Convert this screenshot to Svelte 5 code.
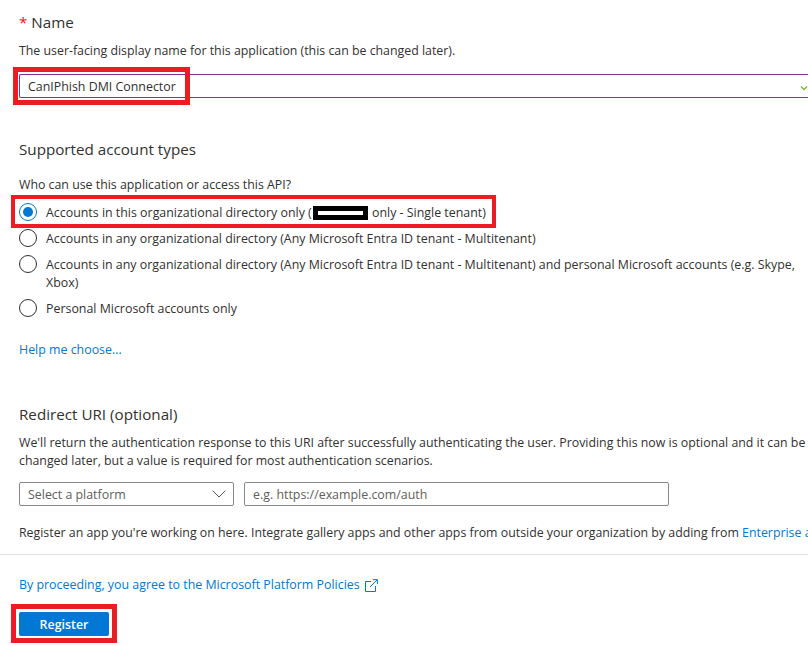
<script lang="ts">
    const accountTypes = [
        { label: "Accounts in any organizational directory (Any Microsoft Entra ID tenant - Multitenant)" },
        { label: "Accounts in any organizational directory (Any Microsoft Entra ID tenant - Multitenant) and personal Microsoft accounts (e.g. Skype, Xbox)" },
        { label: "Personal Microsoft accounts only" },
    ];
</script>

<div class="page">
    <section class="name-section">
        <h2 class="heading"><span class="required">*</span> Name</h2>
        <p class="hint">The user-facing display name for this application (this can be changed later).</p>
        <div class="name-field">
            <span>CanIPhish DMI Connector</span>
            <svg class="check" width="8" height="6" viewBox="0 0 8 6"><path d="M1 1.5 4 4.5 7 1.5" fill="none" stroke="#7fba3c" stroke-width="1.4" /></svg>
        </div>
        <div class="highlight name-highlight"></div>
    </section>

    <section class="accounts-section">
        <h2 class="heading">Supported account types</h2>
        <p class="hint who">Who can use this application or access this API?</p>
        <div class="radios">
            <div class="radio-row">
                <span class="radio checked"></span>
                <span class="radio-label">Accounts in this organizational directory only (<span class="redacted"><span></span></span> only - Single tenant)</span>
            </div>
            {#each accountTypes as item}
                <div class="radio-row">
                    <span class="radio"></span>
                    <span class="radio-label">{item.label}</span>
                </div>
            {/each}
            <div class="highlight radio-highlight"></div>
        </div>
        <a class="link help" href="#help">Help me choose...</a>
    </section>

    <section class="redirect-section">
        <h2 class="heading">Redirect URI (optional)</h2>
        <p class="hint redirect-text">We'll return the authentication response to this URI after successfully authenticating the user. Providing this now is optional and it can be changed later, but a value is required for most authentication scenarios.</p>
        <div class="redirect-inputs">
            <div class="box platform">
                <span>Select a platform</span>
                <svg width="14" height="8" viewBox="0 0 14 8"><path d="M0.7 0.7 7 7 13.3 0.7" fill="none" stroke="#555" stroke-width="1" /></svg>
            </div>
            <div class="box uri">e.g. https://example.com/auth</div>
        </div>
        <p class="hint gallery">Register an app you're working on here. Integrate gallery apps and other apps from outside your organization by adding from <a class="link" href="#enterprise">Enterprise applications</a></p>
    </section>

    <footer class="footer">
        <a class="link policies" href="#policies">
            By proceeding, you agree to the Microsoft Platform Policies
            <svg width="13" height="13" viewBox="0 0 13 13" fill="none" stroke="#0078d4" stroke-width="1"><path d="M6 2.5H0.5V12.5H10.5V7" /><path d="M5 8 12 1M7.8 0.6H12.4V5.2" /></svg>
        </a>
        <div class="register-wrap">
            <button class="register" type="button">Register</button>
            <div class="highlight register-highlight"></div>
        </div>
    </footer>
</div>

<style>
    :global(body) {
        margin: 0;
        background: #fff;
    }

    .page {
        width: 808px;
        height: 646px;
        overflow: hidden;
        font-family: "Open Sans", "Noto Sans", sans-serif;
        font-size: 12.4px;
        color: #323130;
        position: relative;
    }

    section {
        padding-left: 19px;
    }

    .heading {
        margin: 0;
        font-size: 15.2px;
        font-weight: 400;
        line-height: 20px;
    }

    .required {
        color: #e81123;
    }

    .hint {
        margin: 0;
        font-size: 12.35px;
        line-height: 18px;
    }

    .name-section {
        position: relative;
        padding-top: 12px;
    }

    .name-section .hint {
        margin-top: 10px;
    }

    .name-field {
        margin-top: 14px;
        height: 22px;
        border: 1px solid #8a2da5;
        border-right: none;
        border-radius: 2px 0 0 2px;
        padding: 0 0 0 8px;
        display: flex;
        align-items: center;
        justify-content: space-between;
    }

    .check {
        margin-top: 4px;
    }

    .highlight {
        position: absolute;
        box-sizing: border-box;
        border: 5px solid #ed1c24;
        pointer-events: none;
    }

    .name-highlight {
        left: 13px;
        top: 67px;
        width: 177px;
        height: 38px;
    }

    .accounts-section {
        margin-top: 41px;
    }

    .who {
        margin-top: 17px;
    }

    .radios {
        margin-top: 9px;
        display: flex;
        flex-direction: column;
        position: relative;
    }

    .radio-row {
        display: flex;
        align-items: flex-start;
        gap: 9px;
        padding-bottom: 8px;
    }

    .radio {
        flex: none;
        box-sizing: border-box;
        width: 18px;
        height: 18px;
        border: 1px solid #323130;
        border-radius: 50%;
        display: flex;
        align-items: center;
        justify-content: center;
    }

    .radio.checked {
        border-color: #0078d4;
    }

    .radio.checked::after {
        content: "";
        width: 10px;
        height: 10px;
        border-radius: 50%;
        background: #0078d4;
    }

    .radio-label {
        line-height: 18px;
        width: 762px;
        margin: 1px 0 -1px;
    }

    .redacted {
        display: inline-block;
        box-sizing: border-box;
        width: 55px;
        height: 14px;
        margin: 0 1px;
        padding: 5px;
        background: #000;
        vertical-align: -3px;
    }

    .redacted span {
        display: block;
        height: 4px;
        background: #fff;
    }

    .radio-highlight {
        left: -8px;
        top: -8px;
        width: 485px;
        height: 33px;
        border-width: 4px;
    }

    .link {
        color: #0078d4;
        text-decoration: none;
    }

    .help {
        display: block;
        margin-top: 16px;
        line-height: 18px;
    }

    .redirect-section {
        margin-top: 45px;
    }

    .redirect-text {
        margin-top: 10px;
        width: 800px;
    }

    .redirect-inputs {
        display: flex;
        gap: 10px;
        margin-top: 12px;
    }

    .box {
        box-sizing: border-box;
        height: 24px;
        border: 1px solid #8a8886;
        border-radius: 2px;
        padding: 0 8px;
        display: flex;
        align-items: center;
        color: #605e5c;
    }

    .platform {
        width: 215px;
        justify-content: space-between;
    }

    .platform svg {
        margin-right: -1px;
    }

    .uri {
        width: 425px;
    }

    .gallery {
        margin-top: 18px;
        width: 789px;
        white-space: nowrap;
        overflow: hidden;
    }

    .footer {
        margin-top: 12px;
        padding: 21px 0 0 19px;
        border-top: 1px solid #e1e1e1;
    }

    .policies {
        display: flex;
        align-items: center;
        gap: 5px;
        line-height: 18px;
    }

    .register-wrap {
        position: relative;
        margin-top: 18px;
    }

    .register {
        display: block;
        width: 90px;
        height: 24px;
        border: none;
        border-radius: 2px;
        background: #0078d4;
        color: #fff;
        font: 600 12.4px "Open Sans", "Noto Sans", sans-serif;
    }

    .register-highlight {
        left: -8px;
        top: -8px;
        width: 106px;
        height: 39px;
    }
</style>
